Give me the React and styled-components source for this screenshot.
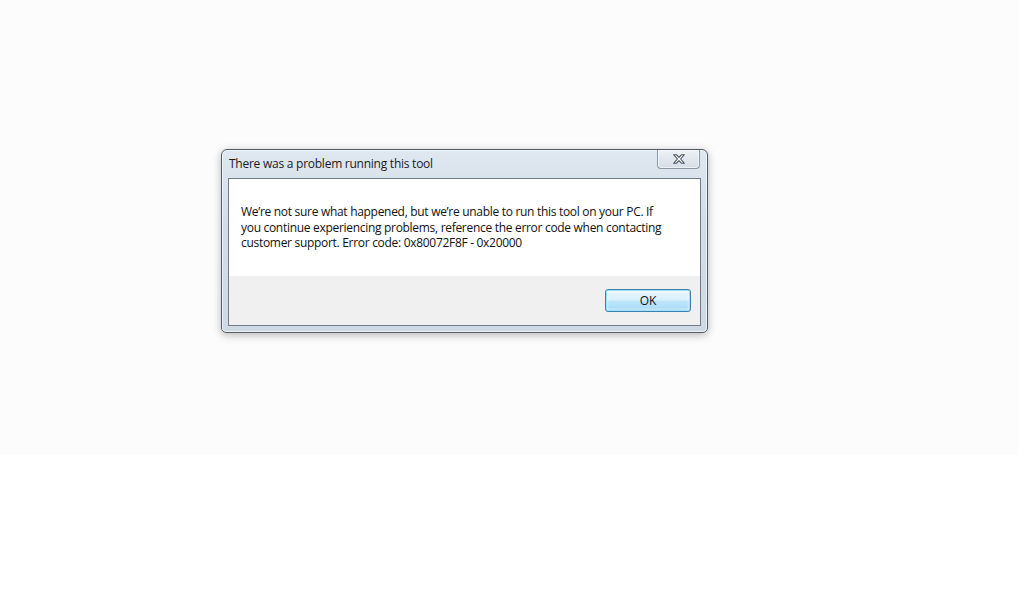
import React from 'react';
import styled, { createGlobalStyle } from 'styled-components';

const GlobalStyle = createGlobalStyle`
  html, body {
    margin: 0;
    padding: 0;
    background: #ffffff;
  }
  body {
    font-family: "Open Sans", "Noto Sans", "Liberation Sans", sans-serif;
  }
`;

const Stage = styled.div`
  height: 455px;
  background: #fcfcfc;
  padding: 149px 0 0 221px;
  box-sizing: border-box;
`;

const Window = styled.div`
  width: 487px;
  height: 184px;
  box-sizing: border-box;
  border: 1px solid #555c66;
  border-radius: 6px 6px 5px 5px;
  background: linear-gradient(180deg, #dfe7f0 0%, #d3dde8 40%, #cfd9e4 100%);
  box-shadow: 0 2px 9px rgba(0, 0, 0, 0.28), inset 0 0 0 1px rgba(255, 255, 255, 0.6);
  display: flex;
  flex-direction: column;
  padding: 0 6px 6px 6px;
`;

const TitleBar = styled.div`
  height: 28px;
  display: flex;
  align-items: flex-start;
  justify-content: space-between;
`;

const Title = styled.span`
  font-size: 12px;
  color: #1b1b1b;
  padding: 5px 0 0 1px;
  letter-spacing: -0.25px;
`;

const CloseButton = styled.div`
  width: 43px;
  height: 19px;
  margin-right: 1px;
  box-sizing: border-box;
  border: 1px solid #8d98a5;
  border-top: none;
  border-radius: 0 0 4px 4px;
  background: linear-gradient(180deg, #eef2f6 0%, #e1e7ee 50%, #d5dde6 100%);
  box-shadow: inset 0 0 0 1px rgba(255, 255, 255, 0.55);
  display: flex;
  align-items: center;
  justify-content: center;
`;

const Panel = styled.div`
  flex: 1;
  border: 1px solid #6f7c8a;
  display: flex;
  flex-direction: column;
  background: #ffffff;
`;

const Message = styled.div`
  height: 97px;
  box-sizing: border-box;
  padding: 25px 12px 0 12px;
  font-size: 12px;
  line-height: 15.5px;
  color: #111;
  letter-spacing: -0.3px;
`;

const Footer = styled.div`
  flex: 1;
  background: #f0f0f0;
  display: flex;
  justify-content: flex-end;
  align-items: flex-start;
  padding: 13px 9px 0 0;
`;

const OkButton = styled.button`
  width: 86px;
  height: 23px;
  border: 1px solid #3c7fb1;
  border-radius: 3px;
  background: linear-gradient(180deg, #e9f6fd 0%, #d9f0fc 48%, #bee6fd 52%, #a7d9f5 100%);
  box-shadow: inset 0 0 0 1px #9ce0fb, inset 0 0 3px 1px rgba(255, 255, 255, 0.8);
  font-family: inherit;
  font-size: 12px;
  color: #111;
  padding: 0;
  cursor: default;
`;

const CloseGlyph = () => (
  <svg width="14" height="12" viewBox="0 0 13 11">
    <path
      d="M1.5 1.5 L4 1.5 L6.5 4 L9 1.5 L11.5 1.5 L8 5.5 L11.5 9.5 L9 9.5 L6.5 7 L4 9.5 L1.5 9.5 L5 5.5 Z"
      fill="#ffffff"
      stroke="#4b5360"
      strokeWidth="1"
      strokeLinejoin="round"
    />
  </svg>
);

const App = () => (
  <>
    <GlobalStyle />
    <Stage>
      <Window>
        <TitleBar>
          <Title>There was a problem running this tool</Title>
          <CloseButton>
            <CloseGlyph />
          </CloseButton>
        </TitleBar>
        <Panel>
          <Message>
            We’re not sure what happened, but we’re unable to run this tool on your PC. If
            <br />
            you continue experiencing problems, reference the error code when contacting
            <br />
            customer support. Error code: 0x80072F8F - 0x20000
          </Message>
          <Footer>
            <OkButton>OK</OkButton>
          </Footer>
        </Panel>
      </Window>
    </Stage>
  </>
);

export default App;
